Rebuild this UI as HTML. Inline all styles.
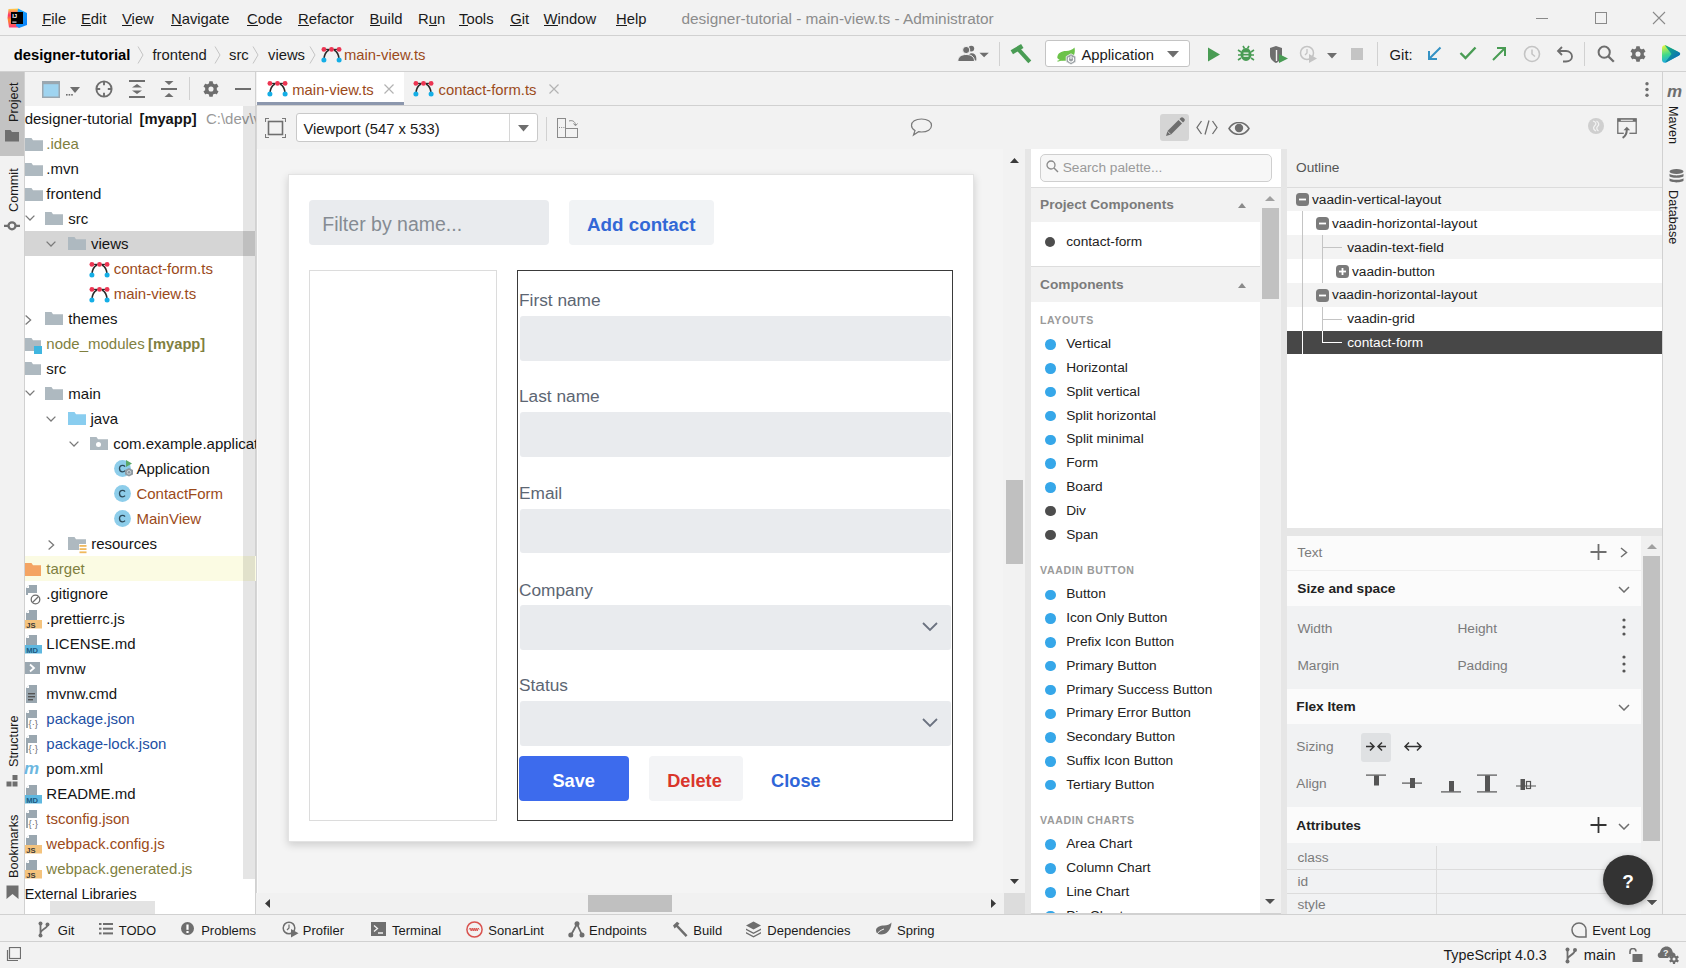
<!DOCTYPE html>
<html><head><meta charset="utf-8"><style>
*{margin:0;padding:0;box-sizing:border-box}
html,body{width:1686px;height:968px;overflow:hidden;background:#f2f2f2;font-family:"Liberation Sans", sans-serif}
.a{position:absolute}
.t{position:absolute;white-space:nowrap;line-height:1;font-family:"Liberation Sans", sans-serif}
u{text-decoration:none;border-bottom:1px solid currentColor;display:inline-block;line-height:0.95}
</style></head><body>
<svg class="a" style="left:4px;top:4px;" width="26" height="26" viewBox="0 0 26 26">
<defs><linearGradient id="ijl" x1="0" y1="0" x2="0" y2="1"><stop offset="0" stop-color="#ffd84a"/><stop offset="0.35" stop-color="#fe2f6a"/><stop offset="0.6" stop-color="#ff8a2a"/><stop offset="1" stop-color="#fe3a78"/></linearGradient>
<linearGradient id="ijr" x1="0" y1="0" x2="1" y2="1"><stop offset="0" stop-color="#1fb6ff"/><stop offset="1" stop-color="#087cfa"/></linearGradient></defs>
<path d="M4.5 5 L14 4.5 L16 23.5 L5 23.5 L3.5 14 Z" fill="url(#ijl)"/>
<path d="M14 4.5 L23 9 L23 21 L15 24 L12 22 Z" fill="url(#ijr)"/>
<rect x="7" y="8" width="12" height="12" fill="#000"/>
<rect x="8.3" y="17.6" width="4.2" height="1" fill="#fff"/>
<text x="8.2" y="14.3" font-family="Liberation Sans" font-weight="bold" font-size="6" fill="#fff">IJ</text>
</svg>
<div class="t" style="left:42.3px;top:12px;font-size:14.8px;color:#1a1a1a;font-weight:400;">File</div>
<div class="a" style="left:42px;top:25px;width:9px;height:1px;background:#1a1a1a"></div>
<div class="t" style="left:81px;top:12px;font-size:14.8px;color:#1a1a1a;font-weight:400;">Edit</div>
<div class="a" style="left:81px;top:25px;width:10px;height:1px;background:#1a1a1a"></div>
<div class="t" style="left:122px;top:12px;font-size:14.8px;color:#1a1a1a;font-weight:400;">View</div>
<div class="a" style="left:122px;top:25px;width:10px;height:1px;background:#1a1a1a"></div>
<div class="t" style="left:171px;top:12px;font-size:14.8px;color:#1a1a1a;font-weight:400;">Navigate</div>
<div class="a" style="left:171px;top:25px;width:11px;height:1px;background:#1a1a1a"></div>
<div class="t" style="left:247px;top:12px;font-size:14.8px;color:#1a1a1a;font-weight:400;">Code</div>
<div class="a" style="left:247px;top:25px;width:11px;height:1px;background:#1a1a1a"></div>
<div class="t" style="left:298px;top:12px;font-size:14.8px;color:#1a1a1a;font-weight:400;">Refactor</div>
<div class="a" style="left:298px;top:25px;width:11px;height:1px;background:#1a1a1a"></div>
<div class="t" style="left:369.5px;top:12px;font-size:14.8px;color:#1a1a1a;font-weight:400;">Build</div>
<div class="a" style="left:370px;top:25px;width:10px;height:1px;background:#1a1a1a"></div>
<div class="t" style="left:418px;top:12px;font-size:14.8px;color:#1a1a1a;font-weight:400;">Run</div>
<div class="a" style="left:429px;top:25px;width:8px;height:1px;background:#1a1a1a"></div>
<div class="t" style="left:459px;top:12px;font-size:14.8px;color:#1a1a1a;font-weight:400;">Tools</div>
<div class="a" style="left:459px;top:25px;width:9px;height:1px;background:#1a1a1a"></div>
<div class="t" style="left:510.3px;top:12px;font-size:14.8px;color:#1a1a1a;font-weight:400;">Git</div>
<div class="a" style="left:510px;top:25px;width:12px;height:1px;background:#1a1a1a"></div>
<div class="t" style="left:543.6px;top:12px;font-size:14.8px;color:#1a1a1a;font-weight:400;">Window</div>
<div class="a" style="left:544px;top:25px;width:14px;height:1px;background:#1a1a1a"></div>
<div class="t" style="left:616px;top:12px;font-size:14.8px;color:#1a1a1a;font-weight:400;">Help</div>
<div class="a" style="left:616px;top:25px;width:11px;height:1px;background:#1a1a1a"></div>
<div class="t" style="left:681.5px;top:11px;font-size:15.4px;color:#8c8c8c;font-weight:400;">designer-tutorial - main-view.ts - Administrator</div>
<div class="a" style="left:1536px;top:18px;width:12px;height:1px;background:#8a8a8a"></div>
<div class="a" style="left:1595px;top:12px;width:12px;height:12px;border:1px solid #8a8a8a"></div>
<svg class="a" style="left:1652px;top:11px;" width="14" height="14" viewBox="0 0 14 14"><path d="M1 1 L13 13 M13 1 L1 13" stroke="#8a8a8a" stroke-width="1.1"/></svg>
<div class="a" style="left:0px;top:35px;width:1686px;height:1px;background:#d1d1d1"></div>
<div class="t" style="left:13.7px;top:48px;font-size:14.8px;color:#000;font-weight:700;">designer-tutorial</div>
<svg class="a" style="left:137px;top:46px;" width="7" height="18" viewBox="0 0 7 18"><path d="M1 0.5 L6 9 L1 17.5" stroke="#c4c4c4" stroke-width="1" fill="none"/></svg>
<div class="t" style="left:152.5px;top:48px;font-size:14.8px;color:#1a1a1a;font-weight:400;">frontend</div>
<svg class="a" style="left:214px;top:46px;" width="7" height="18" viewBox="0 0 7 18"><path d="M1 0.5 L6 9 L1 17.5" stroke="#c4c4c4" stroke-width="1" fill="none"/></svg>
<div class="t" style="left:229px;top:48px;font-size:14.8px;color:#1a1a1a;font-weight:400;">src</div>
<svg class="a" style="left:252px;top:46px;" width="7" height="18" viewBox="0 0 7 18"><path d="M1 0.5 L6 9 L1 17.5" stroke="#c4c4c4" stroke-width="1" fill="none"/></svg>
<div class="t" style="left:268px;top:48px;font-size:14.8px;color:#1a1a1a;font-weight:400;">views</div>
<svg class="a" style="left:309px;top:46px;" width="7" height="18" viewBox="0 0 7 18"><path d="M1 0.5 L6 9 L1 17.5" stroke="#c4c4c4" stroke-width="1" fill="none"/></svg>
<svg class="a" style="left:320.5px;top:46px;" width="21" height="17" viewBox="0 0 21 17">
<path d="M2.9 3.4 L18.1 3.4" stroke="#2a2a2a" stroke-width="1.2"/>
<path d="M3 13 C3.3 8.5 5 5.5 8 4 M13 4 C16 5.5 17.7 8.5 18 13" stroke="#2a2a2a" stroke-width="1.5" fill="none"/>
<circle cx="2.9" cy="3.4" r="2.4" fill="#ec3552"/><circle cx="10.5" cy="3.4" r="2.4" fill="#ec3552"/><circle cx="18.1" cy="3.4" r="2.4" fill="#ec3552"/>
<circle cx="2.9" cy="13.9" r="2.5" fill="#14aee6"/><circle cx="18.1" cy="13.9" r="2.5" fill="#14aee6"/>
</svg>
<div class="t" style="left:344px;top:48px;font-size:14.8px;color:#9b4a1a;font-weight:400;">main-view.ts</div>
<svg class="a" style="left:957px;top:45px;" width="34" height="17" viewBox="0 0 34 17">
<circle cx="14.3" cy="3.6" r="2.9" fill="#6e6e6e"/><path d="M11 15.5 C11 10 12.5 8.3 14.8 8.3 C17.2 8.3 19.3 10 19.3 13 L19.3 15.5 Z" fill="#6e6e6e"/>
<circle cx="9.2" cy="5" r="3.6" stroke="#f2f2f2" stroke-width="1" fill="#6e6e6e"/><path d="M0.8 16.5 C0.8 11.5 4.5 9.5 9.2 9.5 C13.9 9.5 17.5 11.5 17.5 16.5 Z" stroke="#f2f2f2" stroke-width="1" fill="#6e6e6e"/>
<path d="M22.5 7.8 L31.8 7.8 L27.1 12.2 Z" fill="#6e6e6e"/></svg>
<div class="a" style="left:999px;top:42px;width:1px;height:24px;background:#d1d1d1"></div>
<svg class="a" style="left:1010px;top:44px;" width="22" height="20" viewBox="0 0 22 20"><path d="M1.8 8.3 L12.3 2" stroke="#499c54" stroke-width="4.6"/><path d="M8.2 5.2 L19.8 17.8" stroke="#499c54" stroke-width="4"/></svg>
<div class="a" style="left:1045px;top:40px;width:145px;height:27px;background:#fff;border:1px solid #c4c4c4;border-radius:3px"></div>
<svg class="a" style="left:1056px;top:47px;" width="21" height="18" viewBox="0 0 21 18">
<path d="M1.3 11 C1.3 6 5.5 4 10 4 C13.5 4 16.5 2.5 18.5 0.5 C19.5 5 18.5 10 14 12.5 C10 14.5 4 14.5 1.3 11 Z" fill="#6cc24a"/>
<path d="M1.5 14.3 L7 12.5" stroke="#6cc24a" stroke-width="1.2"/>
<path d="M15 6.8 L19.8 9.5 L19.8 15 L15 17.7 L10.2 15 L10.2 9.5 Z" fill="#9aa0a4" stroke="#f7f7f7" stroke-width="0.8"/>
<path d="M13.3 10.3 A2.7 2.7 0 1 0 16.7 10.3" fill="none" stroke="#fff" stroke-width="1.1"/><path d="M15 8.8 L15 12" stroke="#fff" stroke-width="1.1"/></svg>
<div class="t" style="left:1081.5px;top:48px;font-size:14.8px;color:#1a1a1a;font-weight:400;">Application</div>
<svg class="a" style="left:1167px;top:51px;" width="12" height="7" viewBox="0 0 12 7"><path d="M0 0 L12 0 L6 6.5 Z" fill="#6e6e6e"/></svg>
<svg class="a" style="left:1207px;top:47px;" width="14" height="15" viewBox="0 0 14 15"><path d="M1 0.5 L13 7.5 L1 14.5 Z" fill="#499c54"/></svg>
<svg class="a" style="left:1237px;top:45px;" width="18" height="17" viewBox="0 0 18 17">
<ellipse cx="9" cy="9.5" rx="5.5" ry="6.5" fill="#499c54"/>
<path d="M1 5 L4 7 M17 5 L14 7 M1 10 L4 10 M17 10 L14 10 M1 15 L4 13 M17 15 L14 13 M6 1 L7.5 3.5 M12 1 L10.5 3.5" stroke="#499c54" stroke-width="1.6"/>
<rect x="6.5" y="7.5" width="5" height="1.3" fill="#f2f2f2"/><rect x="6.5" y="10.5" width="5" height="1.3" fill="#f2f2f2"/></svg>
<svg class="a" style="left:1269px;top:46px;" width="20" height="18" viewBox="0 0 20 18">
<path d="M1 2 L7 0 L13 2 L13 9 C13 13 10 15.5 7 17 C4 15.5 1 13 1 9 Z" fill="#6e6e6e"/>
<path d="M7.5 4 L7.5 15" stroke="#f2f2f2" stroke-width="1.4"/>
<path d="M10 8 L19 12.5 L10 17 Z" fill="#499c54"/></svg>
<svg class="a" style="left:1299px;top:45px;" width="20" height="19" viewBox="0 0 20 19">
<circle cx="8" cy="8" r="6.5" fill="none" stroke="#c4c4c4" stroke-width="1.5"/>
<path d="M8 4 L8 8 L6 10" stroke="#c4c4c4" stroke-width="1.3" fill="none"/>
<path d="M10 9 L18 13.5 L10 18 Z" fill="#c4c4c4"/></svg>
<svg class="a" style="left:1327px;top:53px;" width="10" height="6" viewBox="0 0 10 6"><path d="M0 0 L10 0 L5 5.5 Z" fill="#6e6e6e"/></svg>
<div class="a" style="left:1351px;top:48px;width:12px;height:12px;background:#c4c4c4"></div>
<div class="a" style="left:1377px;top:42px;width:1px;height:24px;background:#d1d1d1"></div>
<div class="t" style="left:1389.6px;top:48px;font-size:14.8px;color:#1a1a1a;font-weight:400;">Git:</div>
<svg class="a" style="left:1427px;top:46px;" width="15" height="15" viewBox="0 0 15 15"><path d="M13.5 1.5 L3 12 M2 5 L2 13 L10 13" stroke="#3592c4" stroke-width="2" fill="none"/></svg>
<svg class="a" style="left:1459px;top:46px;" width="18" height="14" viewBox="0 0 18 14"><path d="M1.5 7 L6.5 12 L16.5 1.5" stroke="#499c54" stroke-width="2.4" fill="none"/></svg>
<svg class="a" style="left:1491px;top:46px;" width="16" height="16" viewBox="0 0 16 16"><path d="M2 14 L13.5 2.5 M6 2 L14 2 L14 10" stroke="#499c54" stroke-width="2" fill="none"/></svg>
<svg class="a" style="left:1523px;top:45px;" width="18" height="18" viewBox="0 0 18 18"><circle cx="9" cy="9" r="7.5" fill="none" stroke="#c4c4c4" stroke-width="1.6"/>
<path d="M9 4.5 L9 9 L12 11.5" stroke="#c4c4c4" stroke-width="1.5" fill="none"/></svg>
<svg class="a" style="left:1556px;top:45px;" width="18" height="18" viewBox="0 0 18 18"><path d="M6 2 L2 6 L6 10" stroke="#6e6e6e" stroke-width="1.8" fill="none"/>
<path d="M2.5 6 L10 6 C13.5 6 16 8.5 16 11.5 C16 14.5 13.5 16.5 10 16.5 L7 16.5" stroke="#6e6e6e" stroke-width="1.8" fill="none"/></svg>
<div class="a" style="left:1584px;top:42px;width:1px;height:24px;background:#d1d1d1"></div>
<svg class="a" style="left:1597px;top:45px;" width="19" height="19" viewBox="0 0 19 19"><circle cx="7.2" cy="7.2" r="5.6" fill="none" stroke="#6e6e6e" stroke-width="2"/>
<path d="M11.2 11.2 L16.8 16.8" stroke="#6e6e6e" stroke-width="2.3"/></svg>
<svg class="a" style="left:1629.8px;top:46px;" width="16" height="16" viewBox="0 0 16 16"><rect x="6.1" y="0.3" width="3.8" height="15.4" rx="0.6" fill="#6e6e6e" transform="rotate(0 8.0 8.0)"/><rect x="6.1" y="0.3" width="3.8" height="15.4" rx="0.6" fill="#6e6e6e" transform="rotate(60 8.0 8.0)"/><rect x="6.1" y="0.3" width="3.8" height="15.4" rx="0.6" fill="#6e6e6e" transform="rotate(120 8.0 8.0)"/><circle cx="8.0" cy="8.0" r="5.92" fill="#6e6e6e"/><circle cx="8.0" cy="8.0" r="2.56" fill="#f2f2f2"/></svg>
<svg class="a" style="left:1661px;top:45px;" width="20" height="18" viewBox="0 0 20 18">
<defs><linearGradient id="jb" x1="0" y1="0" x2="0.3" y2="1"><stop offset="0" stop-color="#f3f63a"/><stop offset="0.55" stop-color="#3fd98a"/><stop offset="1" stop-color="#1aa6e8"/></linearGradient>
<linearGradient id="jb2" x1="0" y1="0" x2="1" y2="1"><stop offset="0" stop-color="#10b87a"/><stop offset="1" stop-color="#0b5bc8"/></linearGradient></defs>
<path d="M1 3.3 C1 0.8 3.2 -0.3 5.5 0.8 L18 7.3 C19.6 8.2 19.6 9.6 18 10.5 L5.5 17.2 C3 18.4 1 17.3 1 14.8 Z" fill="url(#jb)"/>
<path d="M3.8 0.3 C4.5 0.2 5 0.5 5.5 0.8 L18 7.3 C19.6 8.2 19.6 9.6 18 10.5 L5.5 17.2 C5 17.5 4.5 17.6 4 17.6 L10.5 9 Z" fill="url(#jb2)"/></svg>
<div class="a" style="left:0px;top:71px;width:1686px;height:1px;background:#d1d1d1"></div>
<div class="a" style="left:0px;top:72px;width:24px;height:842px;background:#f2f2f2"></div>
<div class="a" style="left:24px;top:72px;width:1px;height:842px;background:#d1d1d1"></div>
<div class="a" style="left:0px;top:72px;width:24px;height:84px;background:#c3c3c3"></div>
<div class="t" style="left:17.6px;top:112.2px;font-size:12.7px;color:#1a1a1a;font-weight:400;transform-origin:0 10px;transform:rotate(-90deg);">Project</div>
<svg class="a" style="left:5px;top:129px;" width="15" height="13" viewBox="0 0 15 13"><path d="M0 1 L5.5 1 L7 3 L14 3 L14 12.5 L0 12.5 Z" fill="#6e6e6e"/></svg>
<div class="t" style="left:17.6px;top:202px;font-size:12.7px;color:#1a1a1a;font-weight:400;transform-origin:0 10px;transform:rotate(-90deg);">Commit</div>
<svg class="a" style="left:4px;top:219.5px;" width="16" height="12" viewBox="0 0 16 12"><circle cx="8" cy="5.8" r="3.5" fill="none" stroke="#6e6e6e" stroke-width="2.3"/><path d="M0 5.8 L4.3 5.8 M11.7 5.8 L16 5.8" stroke="#6e6e6e" stroke-width="2.2"/></svg>
<div class="t" style="left:17.6px;top:757.4px;font-size:12.7px;color:#1a1a1a;font-weight:400;transform-origin:0 10px;transform:rotate(-90deg);">Structure</div>
<svg class="a" style="left:6px;top:775px;" width="13" height="12" viewBox="0 0 13 12"><rect x="6.5" y="0" width="5" height="5" fill="#6e6e6e"/><rect x="0.5" y="6.5" width="5" height="5" fill="#6e6e6e"/><rect x="6.5" y="6.5" width="5" height="5" fill="#6e6e6e"/></svg>
<div class="t" style="left:17.6px;top:868.3px;font-size:12.7px;color:#1a1a1a;font-weight:400;transform-origin:0 10px;transform:rotate(-90deg);">Bookmarks</div>
<svg class="a" style="left:6px;top:885px;" width="13" height="15" viewBox="0 0 13 15"><path d="M0.5 0.5 L12.5 0.5 L12.5 14 L6.5 9 L0.5 14 Z" fill="#6e6e6e"/></svg>
<div class="a" style="left:25px;top:72px;width:231px;height:34px;background:#f2f2f2"></div>
<svg class="a" style="left:42px;top:81px;" width="18" height="17" viewBox="0 0 18 17"><rect x="0" y="0" width="18" height="17" fill="#9aa7b0"/><rect x="1.5" y="3.2" width="15" height="12.3" fill="#9fd4f0"/></svg>
<svg class="a" style="left:66px;top:87px;" width="14" height="9" viewBox="0 0 14 9"><path d="M4 0 L14 0 L9 6 Z" fill="#6e6e6e"/><rect x="0" y="7" width="1.6" height="1.6" fill="#6e6e6e"/><rect x="2.6" y="7" width="1.6" height="1.6" fill="#6e6e6e"/><rect x="5.2" y="7" width="1.6" height="1.6" fill="#6e6e6e"/></svg>
<svg class="a" style="left:95px;top:80px;" width="18" height="18" viewBox="0 0 18 18"><circle cx="9" cy="9" r="7.6" fill="none" stroke="#6e6e6e" stroke-width="1.9"/><path d="M9 1.5 L9 5.2 M9 12.8 L9 16.5 M1.5 9 L5.2 9 M12.8 9 L16.5 9" stroke="#6e6e6e" stroke-width="1.9"/></svg>
<svg class="a" style="left:129px;top:80px;" width="16" height="18" viewBox="0 0 16 18"><rect x="0" y="0" width="16" height="2" fill="#6e6e6e"/><rect x="0" y="16" width="16" height="2" fill="#6e6e6e"/><path d="M3 7.5 L8 4 L13 7.5 Z M3 10.5 L8 14 L13 10.5 Z" fill="#6e6e6e"/></svg>
<svg class="a" style="left:161px;top:80px;" width="16" height="18" viewBox="0 0 16 18"><path d="M3.5 1 L12.5 1 L8 5 Z M3.5 17 L12.5 17 L8 13 Z" fill="#6e6e6e"/><rect x="0" y="8" width="16" height="2" fill="#6e6e6e"/></svg>
<div class="a" style="left:189px;top:77px;width:1px;height:23px;background:#d1d1d1"></div>
<svg class="a" style="left:203px;top:81px;" width="16" height="16" viewBox="0 0 16 16"><rect x="6.1" y="0.3" width="3.8" height="15.4" rx="0.6" fill="#6e6e6e" transform="rotate(0 8.0 8.0)"/><rect x="6.1" y="0.3" width="3.8" height="15.4" rx="0.6" fill="#6e6e6e" transform="rotate(60 8.0 8.0)"/><rect x="6.1" y="0.3" width="3.8" height="15.4" rx="0.6" fill="#6e6e6e" transform="rotate(120 8.0 8.0)"/><circle cx="8.0" cy="8.0" r="5.92" fill="#6e6e6e"/><circle cx="8.0" cy="8.0" r="2.56" fill="#f2f2f2"/></svg>
<div class="a" style="left:235px;top:88px;width:16px;height:2px;background:#6e6e6e"></div>
<div class="a" style="left:25px;top:106px;width:231px;height:808px;background:#fff"></div>
<div class="a" style="left:255px;top:72px;width:1px;height:842px;background:#d1d1d1"></div>
<div class="a" style="left:25px;top:231px;width:231px;height:25px;background:#d5d5d5"></div>
<div class="a" style="left:25px;top:556px;width:231px;height:25px;background:#fbfbe3"></div>
<div class="t" style="left:24.7px;top:111.4px;font-size:15px;color:#141414;font-weight:400;">designer-tutorial</div>
<div class="t" style="left:139.5px;top:112.4px;font-size:14.7px;color:#141414;font-weight:700;">[myapp]</div>
<div class="t" style="left:205.9px;top:111.4px;font-size:15px;color:#999999;font-weight:400;">C:\dev\v</div>
<svg class="a" style="left:25px;top:138px;" width="18" height="13" viewBox="0 0 18 13"><path d="M0 0 L6.5 0 L8 2.3 L18 2.3 L18 13 L0 13 Z" fill="#aeb9c0"/></svg>
<div class="t" style="left:46.3px;top:136.4px;font-size:15px;color:#7f7f3f;font-weight:400;">.idea</div>
<svg class="a" style="left:25px;top:163px;" width="18" height="13" viewBox="0 0 18 13"><path d="M0 0 L6.5 0 L8 2.3 L18 2.3 L18 13 L0 13 Z" fill="#aeb9c0"/></svg>
<div class="t" style="left:46.3px;top:161.4px;font-size:15px;color:#141414;font-weight:400;">.mvn</div>
<svg class="a" style="left:25px;top:188px;" width="18" height="13" viewBox="0 0 18 13"><path d="M0 0 L6.5 0 L8 2.3 L18 2.3 L18 13 L0 13 Z" fill="#aeb9c0"/></svg>
<div class="t" style="left:46.3px;top:186.4px;font-size:15px;color:#141414;font-weight:400;">frontend</div>
<svg class="a" style="left:25px;top:215px;" width="10" height="6" viewBox="0 0 10 6"><path d="M0.6 0.6 L5 5 L9.4 0.6" stroke="#7a7a7a" stroke-width="1.3" fill="none"/></svg>
<svg class="a" style="left:45px;top:212px;" width="18" height="13" viewBox="0 0 18 13"><path d="M0 0 L6.5 0 L8 2.3 L18 2.3 L18 13 L0 13 Z" fill="#aeb9c0"/></svg>
<div class="t" style="left:68.3px;top:211.4px;font-size:15px;color:#141414;font-weight:400;">src</div>
<svg class="a" style="left:46px;top:240.5px;" width="10" height="6" viewBox="0 0 10 6"><path d="M0.6 0.6 L5 5 L9.4 0.6" stroke="#7a7a7a" stroke-width="1.3" fill="none"/></svg>
<svg class="a" style="left:68px;top:237px;" width="18" height="13" viewBox="0 0 18 13"><path d="M0 0 L6.5 0 L8 2.3 L18 2.3 L18 13 L0 13 Z" fill="#aeb9c0"/></svg>
<div class="t" style="left:91px;top:236.4px;font-size:15px;color:#141414;font-weight:400;">views</div>
<svg class="a" style="left:88.5px;top:261px;" width="21" height="17" viewBox="0 0 21 17">
<path d="M2.9 3.4 L18.1 3.4" stroke="#2a2a2a" stroke-width="1.2"/>
<path d="M3 13 C3.3 8.5 5 5.5 8 4 M13 4 C16 5.5 17.7 8.5 18 13" stroke="#2a2a2a" stroke-width="1.5" fill="none"/>
<circle cx="2.9" cy="3.4" r="2.4" fill="#ec3552"/><circle cx="10.5" cy="3.4" r="2.4" fill="#ec3552"/><circle cx="18.1" cy="3.4" r="2.4" fill="#ec3552"/>
<circle cx="2.9" cy="13.9" r="2.5" fill="#14aee6"/><circle cx="18.1" cy="13.9" r="2.5" fill="#14aee6"/>
</svg>
<div class="t" style="left:113.7px;top:261.4px;font-size:15px;color:#9b4a1a;font-weight:400;">contact-form.ts</div>
<svg class="a" style="left:88.5px;top:286px;" width="21" height="17" viewBox="0 0 21 17">
<path d="M2.9 3.4 L18.1 3.4" stroke="#2a2a2a" stroke-width="1.2"/>
<path d="M3 13 C3.3 8.5 5 5.5 8 4 M13 4 C16 5.5 17.7 8.5 18 13" stroke="#2a2a2a" stroke-width="1.5" fill="none"/>
<circle cx="2.9" cy="3.4" r="2.4" fill="#ec3552"/><circle cx="10.5" cy="3.4" r="2.4" fill="#ec3552"/><circle cx="18.1" cy="3.4" r="2.4" fill="#ec3552"/>
<circle cx="2.9" cy="13.9" r="2.5" fill="#14aee6"/><circle cx="18.1" cy="13.9" r="2.5" fill="#14aee6"/>
</svg>
<div class="t" style="left:113.7px;top:286.4px;font-size:15px;color:#9b4a1a;font-weight:400;">main-view.ts</div>
<svg class="a" style="left:25px;top:314.5px;" width="7" height="10" viewBox="0 0 7 10"><path d="M0.6 0.6 L5.6 5 L0.6 9.4" stroke="#7a7a7a" stroke-width="1.3" fill="none"/></svg>
<svg class="a" style="left:45px;top:312px;" width="18" height="13" viewBox="0 0 18 13"><path d="M0 0 L6.5 0 L8 2.3 L18 2.3 L18 13 L0 13 Z" fill="#aeb9c0"/></svg>
<div class="t" style="left:68.3px;top:311.4px;font-size:15px;color:#141414;font-weight:400;">themes</div>
<svg class="a" style="left:25px;top:337.5px;" width="16" height="13" viewBox="0 0 16 13"><path d="M0 0 L6.5 0 L8 2.3 L16 2.3 L16 13 L0 13 Z" fill="#aeb9c0"/></svg>
<div class="a" style="left:34px;top:346px;width:8px;height:8px;background:#40b6e0"></div>
<div class="t" style="left:46.3px;top:336.4px;font-size:15px;color:#7f7f3f;font-weight:400;">node_modules</div>
<div class="t" style="left:148.1px;top:337.4px;font-size:14.7px;color:#7f7f3f;font-weight:700;">[myapp]</div>
<svg class="a" style="left:25px;top:362px;" width="16" height="13" viewBox="0 0 16 13"><path d="M0 0 L6.5 0 L8 2.3 L16 2.3 L16 13 L0 13 Z" fill="#aeb9c0"/></svg>
<div class="t" style="left:46.3px;top:361.4px;font-size:15px;color:#141414;font-weight:400;">src</div>
<svg class="a" style="left:25px;top:390px;" width="10" height="6" viewBox="0 0 10 6"><path d="M0.6 0.6 L5 5 L9.4 0.6" stroke="#7a7a7a" stroke-width="1.3" fill="none"/></svg>
<svg class="a" style="left:45px;top:387px;" width="18" height="13" viewBox="0 0 18 13"><path d="M0 0 L6.5 0 L8 2.3 L18 2.3 L18 13 L0 13 Z" fill="#aeb9c0"/></svg>
<div class="t" style="left:68.3px;top:386.4px;font-size:15px;color:#141414;font-weight:400;">main</div>
<svg class="a" style="left:46px;top:415.5px;" width="10" height="6" viewBox="0 0 10 6"><path d="M0.6 0.6 L5 5 L9.4 0.6" stroke="#7a7a7a" stroke-width="1.3" fill="none"/></svg>
<svg class="a" style="left:68px;top:412px;" width="18" height="13" viewBox="0 0 18 13"><path d="M0 0 L6.5 0 L8 2.3 L18 2.3 L18 13 L0 13 Z" fill="#89cdef"/></svg>
<div class="t" style="left:90.5px;top:411.4px;font-size:15px;color:#141414;font-weight:400;">java</div>
<svg class="a" style="left:69px;top:440.5px;" width="10" height="6" viewBox="0 0 10 6"><path d="M0.6 0.6 L5 5 L9.4 0.6" stroke="#7a7a7a" stroke-width="1.3" fill="none"/></svg>
<svg class="a" style="left:90px;top:436.5px;" width="18" height="13" viewBox="0 0 18 13"><path d="M0 0 L6.5 0 L8 2.3 L18 2.3 L18 13 L0 13 Z" fill="#aeb9c0"/></svg>
<div class="a" style="left:96px;top:442px;width:5px;height:5px;background:#fff;border-radius:50%"></div>
<div class="t" style="left:113.2px;top:436.4px;font-size:15px;color:#141414;font-weight:400;">com.example.application</div>
<svg class="a" style="left:113.5px;top:459.5px;" width="19" height="17" viewBox="0 0 19 17"><circle cx="8.5" cy="8.5" r="8.4" fill="#8dcdea"/><path d="M11 6.6 C10.4 5.8 9.6 5.4 8.6 5.4 C6.8 5.4 5.5 6.8 5.5 8.6 C5.5 10.4 6.8 11.8 8.6 11.8 C9.6 11.8 10.4 11.4 11 10.6" stroke="#2d4a5a" stroke-width="1.35" fill="none"/><path d="M12 0 L18 3.5 L12 7 Z" fill="#59a869"/><path d="M11 10 L15 8 L19 10 L19 14.5 L15 16.5 L11 14.5 Z" fill="#8f9aa2"/><circle cx="15" cy="12.3" r="1.8" fill="none" stroke="#d0d8dd" stroke-width="0.9"/></svg>
<div class="t" style="left:136.4px;top:461.4px;font-size:15px;color:#141414;font-weight:400;">Application</div>
<svg class="a" style="left:113.5px;top:484.8px;" width="19" height="17" viewBox="0 0 19 17"><circle cx="8.5" cy="8.5" r="8.4" fill="#8dcdea"/><path d="M11 6.6 C10.4 5.8 9.6 5.4 8.6 5.4 C6.8 5.4 5.5 6.8 5.5 8.6 C5.5 10.4 6.8 11.8 8.6 11.8 C9.6 11.8 10.4 11.4 11 10.6" stroke="#2d4a5a" stroke-width="1.35" fill="none"/></svg>
<div class="t" style="left:136.4px;top:486.4px;font-size:15px;color:#9b4a1a;font-weight:400;">ContactForm</div>
<svg class="a" style="left:113.5px;top:509.8px;" width="19" height="17" viewBox="0 0 19 17"><circle cx="8.5" cy="8.5" r="8.4" fill="#8dcdea"/><path d="M11 6.6 C10.4 5.8 9.6 5.4 8.6 5.4 C6.8 5.4 5.5 6.8 5.5 8.6 C5.5 10.4 6.8 11.8 8.6 11.8 C9.6 11.8 10.4 11.4 11 10.6" stroke="#2d4a5a" stroke-width="1.35" fill="none"/></svg>
<div class="t" style="left:136.4px;top:511.4px;font-size:15px;color:#9b4a1a;font-weight:400;">MainView</div>
<svg class="a" style="left:47.5px;top:539.5px;" width="7" height="10" viewBox="0 0 7 10"><path d="M0.6 0.6 L5.6 5 L0.6 9.4" stroke="#7a7a7a" stroke-width="1.3" fill="none"/></svg>
<svg class="a" style="left:68px;top:536.5px;" width="18" height="13" viewBox="0 0 18 13"><path d="M0 0 L6.5 0 L8 2.3 L18 2.3 L18 13 L0 13 Z" fill="#aeb9c0"/></svg>
<svg class="a" style="left:79px;top:544px;" width="8" height="10" viewBox="0 0 8 10"><rect width="8" height="10" fill="#fff"/><rect x="0.5" y="1" width="7" height="1.8" fill="#f0b95e"/><rect x="0.5" y="4.2" width="7" height="1.8" fill="#f0b95e"/><rect x="0.5" y="7.4" width="7" height="1.8" fill="#f0b95e"/></svg>
<div class="t" style="left:91.2px;top:536.4px;font-size:15px;color:#141414;font-weight:400;">resources</div>
<svg class="a" style="left:25px;top:562.5px;" width="16" height="13" viewBox="0 0 16 13"><path d="M0 0 L6.5 0 L8 2.3 L16 2.3 L16 13 L0 13 Z" fill="#f4a463"/></svg>
<div class="t" style="left:46.3px;top:561.4px;font-size:15px;color:#7f7f3f;font-weight:400;">target</div>
<svg class="a" style="left:25px;top:585px;" width="13" height="11" viewBox="0 0 13 11"><path d="M4 0 L12 0 L12 10 L1 10 L1 3 Z" fill="#9aa7b0"/><path d="M1 3 L4 0 L4 3 Z" fill="#fff"/></svg>
<svg class="a" style="left:28px;top:593px;" width="14" height="12" viewBox="0 0 14 12"><rect width="14" height="12" fill="#fff"/><circle cx="7.5" cy="6.5" r="4.3" fill="none" stroke="#6e6e6e" stroke-width="1.3"/><path d="M4.5 9.5 L10.5 3.5" stroke="#6e6e6e" stroke-width="1.3"/></svg>
<div class="t" style="left:46.3px;top:586.4px;font-size:15px;color:#141414;font-weight:400;">.gitignore</div>
<svg class="a" style="left:25px;top:610px;" width="13" height="11" viewBox="0 0 13 11"><path d="M4 0 L12 0 L12 10 L1 10 L1 3 Z" fill="#9aa7b0"/><path d="M1 3 L4 0 L4 3 Z" fill="#fff"/></svg>
<svg class="a" style="left:24.6px;top:620px;" width="17" height="8.5" viewBox="0 0 17 8.5"><rect x="0" y="0" width="17" height="8.5" fill="#f4c37d"/><text x="1.3" y="7.6" font-family="Liberation Sans" font-weight="bold" font-size="7.6" fill="#3a3a3a">JS</text></svg>
<div class="t" style="left:46.3px;top:611.4px;font-size:15px;color:#141414;font-weight:400;">.prettierrc.js</div>
<svg class="a" style="left:25px;top:635px;" width="13" height="11" viewBox="0 0 13 11"><path d="M4 0 L12 0 L12 10 L1 10 L1 3 Z" fill="#9aa7b0"/><path d="M1 3 L4 0 L4 3 Z" fill="#fff"/></svg>
<svg class="a" style="left:24.6px;top:645px;" width="17" height="8.5" viewBox="0 0 17 8.5"><rect x="0" y="0" width="17" height="8.5" fill="#5fb8e0"/><text x="1.3" y="7.6" font-family="Liberation Sans" font-weight="bold" font-size="7.6" fill="#1e5a80">MD</text></svg>
<div class="t" style="left:46.3px;top:636.4px;font-size:15px;color:#141414;font-weight:400;">LICENSE.md</div>
<svg class="a" style="left:25px;top:662px;" width="15" height="12" viewBox="0 0 15 12"><rect width="15" height="12" fill="#9aa7b0"/><path d="M5 2.5 L9 6 L5 9.5" stroke="#fff" stroke-width="1.8" fill="none"/></svg>
<div class="t" style="left:46.3px;top:661.4px;font-size:15px;color:#141414;font-weight:400;">mvnw</div>
<svg class="a" style="left:25px;top:685px;" width="13" height="18" viewBox="0 0 13 18"><path d="M4 0 L12 0 L12 18 L1 18 L1 3 Z" fill="#9aa7b0"/><path d="M1 3 L4 0 L4 3 Z" fill="#fff"/><rect x="3" y="8" width="7" height="1.4" fill="#555"/><rect x="3" y="11" width="7" height="1.4" fill="#555"/><rect x="3" y="14" width="5" height="1.4" fill="#555"/></svg>
<div class="t" style="left:46.3px;top:686.4px;font-size:15px;color:#141414;font-weight:400;">mvnw.cmd</div>
<svg class="a" style="left:25px;top:710px;" width="13" height="19" viewBox="0 0 13 19"><path d="M4 0 L12 0 L12 8 L8 8 L8 18 L1 18 L1 3 Z" fill="#9aa7b0"/><path d="M1 3 L4 0 L4 3 Z" fill="#fff"/></svg>
<svg class="a" style="left:28px;top:718px;" width="14" height="11" viewBox="0 0 14 11"><rect width="14" height="11" fill="#fff"/><text x="0.5" y="9" font-family="Liberation Sans" font-size="9.5" fill="#6e6e6e">{·}</text></svg>
<div class="t" style="left:46.3px;top:711.4px;font-size:15px;color:#1d4fa3;font-weight:400;">package.json</div>
<svg class="a" style="left:25px;top:735px;" width="13" height="19" viewBox="0 0 13 19"><path d="M4 0 L12 0 L12 8 L8 8 L8 18 L1 18 L1 3 Z" fill="#9aa7b0"/><path d="M1 3 L4 0 L4 3 Z" fill="#fff"/></svg>
<svg class="a" style="left:28px;top:743px;" width="14" height="11" viewBox="0 0 14 11"><rect width="14" height="11" fill="#fff"/><text x="0.5" y="9" font-family="Liberation Sans" font-size="9.5" fill="#6e6e6e">{·}</text></svg>
<div class="t" style="left:46.3px;top:736.4px;font-size:15px;color:#1d4fa3;font-weight:400;">package-lock.json</div>
<svg class="a" style="left:24px;top:762px;" width="20" height="13" viewBox="0 0 20 13"><text x="0" y="12" font-family="Liberation Sans" font-weight="bold" font-style="italic" font-size="17" fill="#6cb7e0">m</text></svg>
<div class="t" style="left:46.3px;top:761.4px;font-size:15px;color:#141414;font-weight:400;">pom.xml</div>
<svg class="a" style="left:25px;top:785px;" width="13" height="11" viewBox="0 0 13 11"><path d="M4 0 L12 0 L12 10 L1 10 L1 3 Z" fill="#9aa7b0"/><path d="M1 3 L4 0 L4 3 Z" fill="#fff"/></svg>
<svg class="a" style="left:24.6px;top:795px;" width="17" height="8.5" viewBox="0 0 17 8.5"><rect x="0" y="0" width="17" height="8.5" fill="#5fb8e0"/><text x="1.3" y="7.6" font-family="Liberation Sans" font-weight="bold" font-size="7.6" fill="#1e5a80">MD</text></svg>
<div class="t" style="left:46.3px;top:786.4px;font-size:15px;color:#141414;font-weight:400;">README.md</div>
<svg class="a" style="left:25px;top:810px;" width="13" height="19" viewBox="0 0 13 19"><path d="M4 0 L12 0 L12 8 L8 8 L8 18 L1 18 L1 3 Z" fill="#9aa7b0"/><path d="M1 3 L4 0 L4 3 Z" fill="#fff"/></svg>
<svg class="a" style="left:28px;top:818px;" width="14" height="11" viewBox="0 0 14 11"><rect width="14" height="11" fill="#fff"/><text x="0.5" y="9" font-family="Liberation Sans" font-size="9.5" fill="#6e6e6e">{·}</text></svg>
<div class="t" style="left:46.3px;top:811.4px;font-size:15px;color:#9b4a1a;font-weight:400;">tsconfig.json</div>
<svg class="a" style="left:25px;top:835px;" width="13" height="11" viewBox="0 0 13 11"><path d="M4 0 L12 0 L12 10 L1 10 L1 3 Z" fill="#9aa7b0"/><path d="M1 3 L4 0 L4 3 Z" fill="#fff"/></svg>
<svg class="a" style="left:24.6px;top:845px;" width="17" height="8.5" viewBox="0 0 17 8.5"><rect x="0" y="0" width="17" height="8.5" fill="#f4c37d"/><text x="1.3" y="7.6" font-family="Liberation Sans" font-weight="bold" font-size="7.6" fill="#3a3a3a">JS</text></svg>
<div class="t" style="left:46.3px;top:836.4px;font-size:15px;color:#9b4a1a;font-weight:400;">webpack.config.js</div>
<svg class="a" style="left:25px;top:860px;" width="13" height="11" viewBox="0 0 13 11"><path d="M4 0 L12 0 L12 10 L1 10 L1 3 Z" fill="#9aa7b0"/><path d="M1 3 L4 0 L4 3 Z" fill="#fff"/></svg>
<svg class="a" style="left:24.6px;top:870px;" width="17" height="8.5" viewBox="0 0 17 8.5"><rect x="0" y="0" width="17" height="8.5" fill="#f4c37d"/><text x="1.3" y="7.6" font-family="Liberation Sans" font-weight="bold" font-size="7.6" fill="#3a3a3a">JS</text></svg>
<div class="t" style="left:46.3px;top:861.4px;font-size:15px;color:#7f7f3f;font-weight:400;">webpack.generated.js</div>
<div class="t" style="left:24.7px;top:887.4px;font-size:14.4px;color:#141414;font-weight:400;">External Libraries</div>
<div class="a" style="left:50px;top:901px;width:105px;height:13px;background:#e3e3e3"></div>
<div class="a" style="left:243px;top:106px;width:12px;height:773px;background:rgba(0,0,0,0.1)"></div>
<div class="a" style="left:256px;top:72px;width:1406px;height:33px;background:#f2f2f2"></div>
<div class="a" style="left:257px;top:72px;width:147px;height:30px;background:#ffffff"></div>
<div class="a" style="left:257px;top:102px;width:147px;height:3px;background:#8c97ad"></div>
<div class="a" style="left:256px;top:105px;width:1406px;height:1px;background:#d1d1d1"></div>
<svg class="a" style="left:266.5px;top:80px;" width="21" height="17" viewBox="0 0 21 17">
<path d="M2.9 3.4 L18.1 3.4" stroke="#2a2a2a" stroke-width="1.2"/>
<path d="M3 13 C3.3 8.5 5 5.5 8 4 M13 4 C16 5.5 17.7 8.5 18 13" stroke="#2a2a2a" stroke-width="1.5" fill="none"/>
<circle cx="2.9" cy="3.4" r="2.4" fill="#ec3552"/><circle cx="10.5" cy="3.4" r="2.4" fill="#ec3552"/><circle cx="18.1" cy="3.4" r="2.4" fill="#ec3552"/>
<circle cx="2.9" cy="13.9" r="2.5" fill="#14aee6"/><circle cx="18.1" cy="13.9" r="2.5" fill="#14aee6"/>
</svg>
<div class="t" style="left:292.3px;top:82.5px;font-size:14.8px;color:#9b4a1a;font-weight:400;">main-view.ts</div>
<svg class="a" style="left:384px;top:84px;" width="10" height="10" viewBox="0 0 10 10"><path d="M0.5 0.5 L9.5 9.5 M9.5 0.5 L0.5 9.5" stroke="#b3b3b3" stroke-width="1.2"/></svg>
<svg class="a" style="left:412.5px;top:80px;" width="21" height="17" viewBox="0 0 21 17">
<path d="M2.9 3.4 L18.1 3.4" stroke="#2a2a2a" stroke-width="1.2"/>
<path d="M3 13 C3.3 8.5 5 5.5 8 4 M13 4 C16 5.5 17.7 8.5 18 13" stroke="#2a2a2a" stroke-width="1.5" fill="none"/>
<circle cx="2.9" cy="3.4" r="2.4" fill="#ec3552"/><circle cx="10.5" cy="3.4" r="2.4" fill="#ec3552"/><circle cx="18.1" cy="3.4" r="2.4" fill="#ec3552"/>
<circle cx="2.9" cy="13.9" r="2.5" fill="#14aee6"/><circle cx="18.1" cy="13.9" r="2.5" fill="#14aee6"/>
</svg>
<div class="t" style="left:438.6px;top:82.5px;font-size:14.8px;color:#9b4a1a;font-weight:400;">contact-form.ts</div>
<svg class="a" style="left:548.5px;top:84px;" width="10" height="10" viewBox="0 0 10 10"><path d="M0.5 0.5 L9.5 9.5 M9.5 0.5 L0.5 9.5" stroke="#b3b3b3" stroke-width="1.2"/></svg>
<svg class="a" style="left:1645px;top:82px;" width="4" height="15" viewBox="0 0 4 15"><circle cx="2" cy="1.8" r="1.7" fill="#6e6e6e"/><circle cx="2" cy="7.5" r="1.7" fill="#6e6e6e"/><circle cx="2" cy="13.2" r="1.7" fill="#6e6e6e"/></svg>
<div class="a" style="left:1662px;top:72px;width:1px;height:842px;background:#d1d1d1"></div>
<svg class="a" style="left:1667px;top:84px;" width="19" height="14" viewBox="0 0 19 14"><text x="0" y="12.5" font-family="Liberation Sans" font-weight="bold" font-style="italic" font-size="17" fill="#6e6e6e">m</text></svg>
<div class="t" style="left:1668.5px;top:95.5px;font-size:12.7px;color:#1a1a1a;font-weight:400;transform-origin:0 10px;transform:rotate(90deg);">Maven</div>
<div class="t" style="left:1668.5px;top:180.3px;font-size:12.7px;color:#1a1a1a;font-weight:400;transform-origin:0 10px;transform:rotate(90deg);">Database</div>
<svg class="a" style="left:1669px;top:169px;" width="15" height="15" viewBox="0 0 15 15"><ellipse cx="7.5" cy="2.6" rx="7" ry="2.5" fill="#6e6e6e"/><path d="M0.5 4.6 C0.5 7 14.5 7 14.5 4.6 L14.5 7 C14.5 9.4 0.5 9.4 0.5 7 Z" fill="#6e6e6e"/><path d="M0.5 9 C0.5 11.4 14.5 11.4 14.5 9 L14.5 11.6 C14.5 14 0.5 14 0.5 11.6 Z" fill="#6e6e6e"/></svg>
<div class="a" style="left:256px;top:106px;width:1406px;height:43px;background:#f2f2f2"></div>
<svg class="a" style="left:265px;top:118px;" width="21" height="20" viewBox="0 0 21 20"><path d="M0.5 4 L0.5 0.5 L4 0.5 M17 0.5 L20.5 0.5 L20.5 4 M20.5 16 L20.5 19.5 L17 19.5 M4 19.5 L0.5 19.5 L0.5 16" stroke="#7a7a7a" stroke-width="1.1" fill="none"/><rect x="3.5" y="3.5" width="14" height="13" fill="none" stroke="#6e6e6e" stroke-width="1.6"/></svg>
<div class="a" style="left:296px;top:113px;width:242px;height:29px;background:#fff;border:1px solid #c9c9c9;border-radius:3px"></div>
<div class="a" style="left:509px;top:114px;width:1px;height:27px;background:#d6d6d6"></div>
<svg class="a" style="left:518px;top:125px;" width="11" height="7" viewBox="0 0 11 7"><path d="M0 0 L11 0 L5.5 6.5 Z" fill="#6e6e6e"/></svg>
<div class="t" style="left:303.4px;top:122px;font-size:14.8px;color:#1a1a1a;font-weight:400;">Viewport (547 x 533)</div>
<div class="a" style="left:546px;top:117px;width:1px;height:24px;background:#d1d1d1"></div>
<svg class="a" style="left:557px;top:118px;" width="21" height="20" viewBox="0 0 21 20"><rect x="0.5" y="0.5" width="8" height="19" fill="none" stroke="#8a8a8a" stroke-width="1"/><rect x="8.5" y="10.5" width="12" height="9" fill="none" stroke="#8a8a8a" stroke-width="1"/><path d="M2 9.5 L8 9.5" stroke="#8a8a8a" stroke-dasharray="1 1.2"/><path d="M12 3 C15 2 18 3 18.5 7 M16.5 5.5 L18.5 7.8 L20.5 5.5" stroke="#8a8a8a" stroke-width="1" fill="none"/></svg>
<svg class="a" style="left:910px;top:118px;" width="23" height="19" viewBox="0 0 23 19"><path d="M11.5 1 C17.5 1 21.5 3.8 21.5 7.5 C21.5 11.2 17.5 14 11.5 14 C10.5 14 9.5 13.9 8.6 13.7 L3.5 17 L5 12.5 C2.8 11.3 1.5 9.5 1.5 7.5 C1.5 3.8 5.5 1 11.5 1 Z" fill="none" stroke="#7a7a7a" stroke-width="1.2"/></svg>
<div class="a" style="left:1160px;top:114px;width:29px;height:27px;background:#d5d5d5;border-radius:3px"></div>
<svg class="a" style="left:1163px;top:117px;" width="22" height="22" viewBox="0 0 22 22"><path d="M3 19 L4.5 14 L15.5 3 L19 6.5 L8 17.5 Z" fill="#6e6e6e"/><path d="M16.5 2 L17.8 0.7 C18.5 0 19.5 0 20.2 0.7 L21.3 1.8 C22 2.5 22 3.5 21.3 4.2 L20 5.5 Z" fill="#6e6e6e"/><path d="M4.6 14.3 L7.7 17.4" stroke="#d5d5d5" stroke-width="0.9"/></svg>
<svg class="a" style="left:1196px;top:120px;" width="22" height="15" viewBox="0 0 22 15"><path d="M5.5 1 L1 7.5 L5.5 14 M16.5 1 L21 7.5 L16.5 14 M13 0.5 L9 14.5" stroke="#6e6e6e" stroke-width="1.3" fill="none"/></svg>
<svg class="a" style="left:1228px;top:122px;" width="22" height="13" viewBox="0 0 22 13"><path d="M1 6.5 C4 1.5 8 0.5 11 0.5 C14 0.5 18 1.5 21 6.5 C18 11.5 14 12.5 11 12.5 C8 12.5 4 11.5 1 6.5 Z" fill="none" stroke="#6e6e6e" stroke-width="1.5"/><circle cx="11" cy="6" r="4.2" fill="#6e6e6e"/></svg>
<svg class="a" style="left:1588px;top:118px;" width="16" height="16" viewBox="0 0 16 16"><circle cx="8" cy="8" r="8" fill="#cfcfcf"/><path d="M5 3 C8 4 9 6 6.5 8 C4.5 10 6 12 8 13 M8.5 3 C11 4.5 11.5 7 9.5 8.5 C8 10 9 12 10.5 13" stroke="#f2f2f2" stroke-width="1.3" fill="none"/></svg>
<svg class="a" style="left:1617px;top:118px;" width="21" height="21" viewBox="0 0 21 21"><rect x="0.8" y="0.8" width="18.4" height="14.5" fill="none" stroke="#6e6e6e" stroke-width="1.3"/><rect x="0.8" y="0.8" width="18.4" height="3" fill="#6e6e6e"/><rect x="3.8" y="1.7" width="12" height="1.2" fill="#e6e6e6"/><rect x="6.8" y="14" width="5.6" height="3" fill="#f2f2f2"/><path d="M6.5 12.3 L9.8 8.8 L13.1 12.3 Z" fill="#6e6e6e"/><path d="M9.8 11.5 C9.8 15.5 8.8 18 5.6 19.8" stroke="#6e6e6e" stroke-width="2" fill="none"/></svg>
<div class="a" style="left:256px;top:149px;width:769px;height:765px;background:#f4f4f4"></div>
<div class="a" style="left:256px;top:106px;width:1px;height:808px;background:#d6d6d6"></div>
<div class="a" style="left:257px;top:149px;width:1px;height:744px;background:#fafafa"></div>
<div class="a" style="left:1003px;top:149px;width:22px;height:744px;background:#f2f2f2"></div>
<svg class="a" style="left:1010px;top:158px;" width="9" height="5" viewBox="0 0 9 5"><path d="M0 5 L4.5 0 L9 5 Z" fill="#3a3a3a"/></svg>
<div class="a" style="left:1006px;top:480px;width:17px;height:84px;background:#c0c0c0"></div>
<svg class="a" style="left:1010px;top:879px;" width="9" height="5" viewBox="0 0 9 5"><path d="M0 0 L4.5 5 L9 0 Z" fill="#3a3a3a"/></svg>
<div class="a" style="left:256px;top:893px;width:769px;height:21px;background:#f1f1f1"></div>
<svg class="a" style="left:265px;top:899px;" width="5" height="9" viewBox="0 0 5 9"><path d="M5 0 L0 4.5 L5 9 Z" fill="#3a3a3a"/></svg>
<div class="a" style="left:588px;top:895px;width:84px;height:17px;background:#c0c0c0"></div>
<svg class="a" style="left:991px;top:899px;" width="5" height="9" viewBox="0 0 5 9"><path d="M0 0 L5 4.5 L0 9 Z" fill="#3a3a3a"/></svg>
<div class="a" style="left:1004px;top:893px;width:21px;height:21px;background:#dcdcdc"></div>
<div class="a" style="left:288px;top:174px;width:686px;height:668px;background:#fff;border:1px solid #e3e3e3;box-shadow:0 3px 8px rgba(0,0,0,0.16)"></div>
<div class="a" style="left:309px;top:200px;width:240px;height:45px;background:#e9ebee;border-radius:4px"></div>
<div class="t" style="left:322.3px;top:214.5px;font-size:19.5px;color:#858b93;font-weight:400;">Filter by name...</div>
<div class="a" style="left:569px;top:200px;width:145px;height:45px;background:#f1f3f5;border-radius:4px"></div>
<div class="t" style="left:587px;top:215.5px;font-size:18.8px;color:#3368d6;font-weight:700;">Add contact</div>
<div class="a" style="left:309px;top:270px;width:188px;height:551px;border:1px solid #dcdcdc"></div>
<div class="a" style="left:517px;top:270px;width:436px;height:551px;border:1.5px solid #3a3a3a"></div>
<div class="t" style="left:519px;top:292px;font-size:17.3px;color:#5d6673;font-weight:400;">First name</div>
<div class="a" style="left:519.5px;top:316px;width:431px;height:44.5px;background:#e9ebee;border-radius:3px"></div>
<div class="t" style="left:519px;top:388.2px;font-size:17.3px;color:#5d6673;font-weight:400;">Last name</div>
<div class="a" style="left:519.5px;top:412px;width:431px;height:44.5px;background:#e9ebee;border-radius:3px"></div>
<div class="t" style="left:519px;top:484.5px;font-size:17.3px;color:#5d6673;font-weight:400;">Email</div>
<div class="a" style="left:519.5px;top:508.5px;width:431px;height:44.5px;background:#e9ebee;border-radius:3px"></div>
<div class="t" style="left:519px;top:581.5px;font-size:17.3px;color:#5d6673;font-weight:400;">Company</div>
<div class="a" style="left:519.5px;top:605.4px;width:431px;height:44.5px;background:#e9ebee;border-radius:3px"></div>
<div class="t" style="left:519px;top:677.3px;font-size:17.3px;color:#5d6673;font-weight:400;">Status</div>
<div class="a" style="left:519.5px;top:701.2px;width:431px;height:44.5px;background:#e9ebee;border-radius:3px"></div>
<svg class="a" style="left:922px;top:622.4px;" width="16" height="10" viewBox="0 0 16 10"><path d="M1 1 L8 8 L15 1" stroke="#6b7280" stroke-width="1.8" fill="none"/></svg>
<svg class="a" style="left:922px;top:718.2px;" width="16" height="10" viewBox="0 0 16 10"><path d="M1 1 L8 8 L15 1" stroke="#6b7280" stroke-width="1.8" fill="none"/></svg>
<div class="a" style="left:518.6px;top:756.3px;width:110px;height:44.5px;background:#3d6bed;border-radius:4px"></div>
<div class="t" style="left:552.4px;top:772.2px;font-size:18.2px;color:#ffffff;font-weight:700;">Save</div>
<div class="a" style="left:649.2px;top:756.3px;width:93.5px;height:44.5px;background:#f3f4f6;border-radius:4px"></div>
<div class="t" style="left:667.2px;top:772.2px;font-size:18.2px;color:#d9352b;font-weight:700;">Delete</div>
<div class="t" style="left:771.1px;top:772.2px;font-size:18.2px;color:#2f66d8;font-weight:700;">Close</div>
<div class="a" style="left:1025px;top:149px;width:6px;height:765px;background:#e6e6e6"></div>
<div class="a" style="left:1031px;top:149px;width:250px;height:765px;background:#ffffff"></div>
<div class="a" style="left:1281px;top:149px;width:6px;height:765px;background:#e6e6e6"></div>
<div class="a" style="left:1040px;top:154px;width:232px;height:28px;background:#f7f7f7;border:1px solid #cfcfcf;border-radius:5px"></div>
<svg class="a" style="left:1046px;top:160px;" width="13" height="13" viewBox="0 0 13 13"><circle cx="5" cy="5" r="4" fill="none" stroke="#8a8a8a" stroke-width="1.3"/><path d="M8 8 L12 12" stroke="#8a8a8a" stroke-width="1.5"/></svg>
<div class="t" style="left:1062.7px;top:160.7px;font-size:13.7px;color:#9a9a9a;font-weight:400;">Search palette...</div>
<div class="a" style="left:1031px;top:187px;width:250px;height:1px;background:#dddddd"></div>
<div class="a" style="left:1260px;top:188px;width:21px;height:726px;background:#f1f1f1"></div>
<svg class="a" style="left:1265px;top:196px;" width="10" height="5" viewBox="0 0 10 5"><path d="M0 5 L5 0 L10 5 Z" fill="#a0a0a0"/></svg>
<div class="a" style="left:1262px;top:208px;width:17px;height:91px;background:#c1c1c1"></div>
<svg class="a" style="left:1265px;top:899px;" width="10" height="5" viewBox="0 0 10 5"><path d="M0 0 L5 5 L10 0 Z" fill="#505050"/></svg>
<div class="a" style="left:1031px;top:188px;width:229px;height:34px;background:#f2f2f2"></div>
<div class="t" style="left:1040px;top:198px;font-size:13.7px;color:#7b7b7b;font-weight:700;">Project Components</div>
<svg class="a" style="left:1238px;top:202.5px;" width="8" height="5" viewBox="0 0 8 5"><path d="M0 5 L4 0 L8 5 Z" fill="#8a8a8a"/></svg>
<div class="a" style="left:1045px;top:236.8px;width:10px;height:10px;background:#4d4d4d;border-radius:50%"></div>
<div class="t" style="left:1066.2px;top:234.5px;font-size:13.7px;color:#222222;font-weight:400;">contact-form</div>
<div class="a" style="left:1031px;top:266px;width:229px;height:1px;background:#dddddd"></div>
<div class="a" style="left:1031px;top:267px;width:229px;height:35px;background:#f2f2f2"></div>
<div class="t" style="left:1040px;top:277.5px;font-size:13.7px;color:#7b7b7b;font-weight:700;">Components</div>
<svg class="a" style="left:1238px;top:283px;" width="8" height="5" viewBox="0 0 8 5"><path d="M0 5 L4 0 L8 5 Z" fill="#8a8a8a"/></svg>
<div class="t" style="left:1040px;top:314.6px;font-size:10.6px;color:#9a9a9a;font-weight:700;letter-spacing:0.6px;">LAYOUTS</div>
<div class="a" style="left:1045px;top:339.3px;width:10.5px;height:10.5px;background:#36a7e9;border-radius:50%"></div>
<div class="t" style="left:1066.2px;top:337.1px;font-size:13.7px;color:#222222;font-weight:400;">Vertical</div>
<div class="a" style="left:1045px;top:363.1px;width:10.5px;height:10.5px;background:#36a7e9;border-radius:50%"></div>
<div class="t" style="left:1066.2px;top:360.90000000000003px;font-size:13.7px;color:#222222;font-weight:400;">Horizontal</div>
<div class="a" style="left:1045px;top:386.90000000000003px;width:10.5px;height:10.5px;background:#36a7e9;border-radius:50%"></div>
<div class="t" style="left:1066.2px;top:384.70000000000005px;font-size:13.7px;color:#222222;font-weight:400;">Split vertical</div>
<div class="a" style="left:1045px;top:410.7px;width:10.5px;height:10.5px;background:#36a7e9;border-radius:50%"></div>
<div class="t" style="left:1066.2px;top:408.5px;font-size:13.7px;color:#222222;font-weight:400;">Split horizontal</div>
<div class="a" style="left:1045px;top:434.5px;width:10.5px;height:10.5px;background:#36a7e9;border-radius:50%"></div>
<div class="t" style="left:1066.2px;top:432.3px;font-size:13.7px;color:#222222;font-weight:400;">Split minimal</div>
<div class="a" style="left:1045px;top:458.3px;width:10.5px;height:10.5px;background:#36a7e9;border-radius:50%"></div>
<div class="t" style="left:1066.2px;top:456.1px;font-size:13.7px;color:#222222;font-weight:400;">Form</div>
<div class="a" style="left:1045px;top:482.1px;width:10.5px;height:10.5px;background:#36a7e9;border-radius:50%"></div>
<div class="t" style="left:1066.2px;top:479.90000000000003px;font-size:13.7px;color:#222222;font-weight:400;">Board</div>
<div class="a" style="left:1045px;top:505.90000000000003px;width:10.5px;height:10.5px;background:#4d4d4d;border-radius:50%"></div>
<div class="t" style="left:1066.2px;top:503.70000000000005px;font-size:13.7px;color:#222222;font-weight:400;">Div</div>
<div class="a" style="left:1045px;top:529.7px;width:10.5px;height:10.5px;background:#4d4d4d;border-radius:50%"></div>
<div class="t" style="left:1066.2px;top:527.5px;font-size:13.7px;color:#222222;font-weight:400;">Span</div>
<div class="t" style="left:1040px;top:565px;font-size:10.6px;color:#9a9a9a;font-weight:700;letter-spacing:0.6px;">VAADIN BUTTON</div>
<div class="a" style="left:1045px;top:589.5px;width:10.5px;height:10.5px;background:#36a7e9;border-radius:50%"></div>
<div class="t" style="left:1066.2px;top:587.3px;font-size:13.7px;color:#222222;font-weight:400;">Button</div>
<div class="a" style="left:1045px;top:613.3px;width:10.5px;height:10.5px;background:#36a7e9;border-radius:50%"></div>
<div class="t" style="left:1066.2px;top:611.0999999999999px;font-size:13.7px;color:#222222;font-weight:400;">Icon Only Button</div>
<div class="a" style="left:1045px;top:637.1px;width:10.5px;height:10.5px;background:#36a7e9;border-radius:50%"></div>
<div class="t" style="left:1066.2px;top:634.9px;font-size:13.7px;color:#222222;font-weight:400;">Prefix Icon Button</div>
<div class="a" style="left:1045px;top:660.9px;width:10.5px;height:10.5px;background:#36a7e9;border-radius:50%"></div>
<div class="t" style="left:1066.2px;top:658.6999999999999px;font-size:13.7px;color:#222222;font-weight:400;">Primary Button</div>
<div class="a" style="left:1045px;top:684.7px;width:10.5px;height:10.5px;background:#36a7e9;border-radius:50%"></div>
<div class="t" style="left:1066.2px;top:682.5px;font-size:13.7px;color:#222222;font-weight:400;">Primary Success Button</div>
<div class="a" style="left:1045px;top:708.5px;width:10.5px;height:10.5px;background:#36a7e9;border-radius:50%"></div>
<div class="t" style="left:1066.2px;top:706.3px;font-size:13.7px;color:#222222;font-weight:400;">Primary Error Button</div>
<div class="a" style="left:1045px;top:732.3px;width:10.5px;height:10.5px;background:#36a7e9;border-radius:50%"></div>
<div class="t" style="left:1066.2px;top:730.0999999999999px;font-size:13.7px;color:#222222;font-weight:400;">Secondary Button</div>
<div class="a" style="left:1045px;top:756.1px;width:10.5px;height:10.5px;background:#36a7e9;border-radius:50%"></div>
<div class="t" style="left:1066.2px;top:753.9px;font-size:13.7px;color:#222222;font-weight:400;">Suffix Icon Button</div>
<div class="a" style="left:1045px;top:779.9px;width:10.5px;height:10.5px;background:#36a7e9;border-radius:50%"></div>
<div class="t" style="left:1066.2px;top:777.6999999999999px;font-size:13.7px;color:#222222;font-weight:400;">Tertiary Button</div>
<div class="t" style="left:1040px;top:814.5px;font-size:10.6px;color:#9a9a9a;font-weight:700;letter-spacing:0.6px;">VAADIN CHARTS</div>
<div class="a" style="left:1045px;top:839.4000000000001px;width:10.5px;height:10.5px;background:#36a7e9;border-radius:50%"></div>
<div class="t" style="left:1066.2px;top:837.2px;font-size:13.7px;color:#222222;font-weight:400;">Area Chart</div>
<div class="a" style="left:1045px;top:863.2px;width:10.5px;height:10.5px;background:#36a7e9;border-radius:50%"></div>
<div class="t" style="left:1066.2px;top:861.0px;font-size:13.7px;color:#222222;font-weight:400;">Column Chart</div>
<div class="a" style="left:1045px;top:887.0000000000001px;width:10.5px;height:10.5px;background:#36a7e9;border-radius:50%"></div>
<div class="t" style="left:1066.2px;top:884.8000000000001px;font-size:13.7px;color:#222222;font-weight:400;">Line Chart</div>
<div class="a" style="left:1045px;top:910.8000000000001px;width:10.5px;height:10.5px;background:#36a7e9;border-radius:50%"></div>
<div class="t" style="left:1066.2px;top:908.6px;font-size:13.7px;color:#222222;font-weight:400;">Pie Chart</div>
<div class="a" style="left:1031px;top:913px;width:250px;height:1px;background:#d1d1d1"></div>
<div class="a" style="left:1287px;top:149px;width:375px;height:38px;background:#f2f2f2"></div>
<div class="t" style="left:1296px;top:160.8px;font-size:13.7px;color:#555555;font-weight:400;">Outline</div>
<div class="a" style="left:1287px;top:187px;width:375px;height:1px;background:#dcdcdc"></div>
<div class="a" style="left:1287px;top:188px;width:375px;height:340px;background:#ffffff"></div>
<div class="a" style="left:1287px;top:188px;width:375px;height:23px;background:#f3f3f3"></div>
<div class="a" style="left:1287px;top:235px;width:375px;height:24px;background:#f3f3f3"></div>
<div class="a" style="left:1287px;top:283px;width:375px;height:23.5px;background:#f3f3f3"></div>
<div class="a" style="left:1287px;top:331px;width:375px;height:23px;background:#474747"></div>
<svg class="a" style="left:1296px;top:193.3px;" width="13" height="13" viewBox="0 0 13 13"><rect x="0" y="0" width="13" height="13" rx="3.5" fill="#7b7b7b"/><rect x="3" y="5.6" width="7" height="1.8" fill="#fff"/></svg>
<div class="t" style="left:1312px;top:192.8px;font-size:13.7px;color:#222222;font-weight:400;">vaadin-vertical-layout</div>
<div class="a" style="left:1302px;top:211px;width:1px;height:143px;background:#c4c4c4"></div>
<svg class="a" style="left:1316px;top:217px;" width="13" height="13" viewBox="0 0 13 13"><rect x="0" y="0" width="13" height="13" rx="3.5" fill="#7b7b7b"/><rect x="3" y="5.6" width="7" height="1.8" fill="#fff"/></svg>
<div class="t" style="left:1331.9px;top:216.9px;font-size:13.7px;color:#222222;font-weight:400;">vaadin-horizontal-layout</div>
<div class="a" style="left:1322px;top:235px;width:1px;height:48px;background:#c4c4c4"></div>
<div class="a" style="left:1323px;top:247px;width:19px;height:1px;background:#c4c4c4"></div>
<div class="t" style="left:1347.2px;top:240.9px;font-size:13.7px;color:#222222;font-weight:400;">vaadin-text-field</div>
<svg class="a" style="left:1336px;top:264.5px;" width="13" height="13" viewBox="0 0 13 13"><rect x="0" y="0" width="13" height="13" rx="3.5" fill="#7b7b7b"/><rect x="3" y="5.6" width="7" height="1.8" fill="#fff"/><rect x="5.6" y="3" width="1.8" height="7" fill="#fff"/></svg>
<div class="t" style="left:1352px;top:264.6px;font-size:13.7px;color:#222222;font-weight:400;">vaadin-button</div>
<svg class="a" style="left:1316px;top:288.5px;" width="13" height="13" viewBox="0 0 13 13"><rect x="0" y="0" width="13" height="13" rx="3.5" fill="#7b7b7b"/><rect x="3" y="5.6" width="7" height="1.8" fill="#fff"/></svg>
<div class="t" style="left:1331.9px;top:288px;font-size:13.7px;color:#222222;font-weight:400;">vaadin-horizontal-layout</div>
<div class="a" style="left:1322px;top:306.5px;width:1px;height:36px;background:#c4c4c4"></div>
<div class="a" style="left:1323px;top:318.5px;width:19px;height:1px;background:#c4c4c4"></div>
<div class="t" style="left:1347.2px;top:312px;font-size:13.7px;color:#222222;font-weight:400;">vaadin-grid</div>
<div class="a" style="left:1322px;top:331px;width:1px;height:12px;background:#ffffff"></div>
<div class="a" style="left:1322px;top:342px;width:20px;height:1px;background:#ffffff"></div>
<div class="a" style="left:1302px;top:331px;width:1px;height:23px;background:#ffffff"></div>
<div class="t" style="left:1347.2px;top:336px;font-size:13.7px;color:#ffffff;font-weight:400;">contact-form</div>
<div class="a" style="left:1287px;top:528px;width:375px;height:8px;background:#e6e6e6"></div>
<div class="a" style="left:1287px;top:536px;width:354px;height:378px;background:#fbfbfb"></div>
<div class="a" style="left:1641px;top:536px;width:21px;height:378px;background:#f0f0f0"></div>
<svg class="a" style="left:1646.5px;top:543.8px;" width="10" height="5" viewBox="0 0 10 5"><path d="M0 5 L5 0 L10 5 Z" fill="#a0a0a0"/></svg>
<div class="a" style="left:1643px;top:556px;width:17px;height:285px;background:#c1c1c1"></div>
<svg class="a" style="left:1646.5px;top:899.5px;" width="10" height="5" viewBox="0 0 10 5"><path d="M0 0 L5 5 L10 0 Z" fill="#505050"/></svg>
<div class="t" style="left:1297.3px;top:545.6px;font-size:13.7px;color:#7d7d7d;font-weight:400;">Text</div>
<svg class="a" style="left:1589.5px;top:543.5px;" width="17" height="16" viewBox="0 0 17 16"><path d="M8.5 0 L8.5 16 M0.5 8 L16.5 8" stroke="#6e6e6e" stroke-width="1.8"/></svg>
<svg class="a" style="left:1620px;top:547px;" width="8" height="11" viewBox="0 0 8 11"><path d="M1 1 L6.5 5.5 L1 10" stroke="#6e6e6e" stroke-width="1.5" fill="none"/></svg>
<div class="a" style="left:1287px;top:570px;width:354px;height:1px;background:#eeeeee"></div>
<div class="t" style="left:1297.3px;top:581.7px;font-size:13.7px;color:#222222;font-weight:700;">Size and space</div>
<svg class="a" style="left:1618px;top:585.5px;" width="12" height="7" viewBox="0 0 12 7"><path d="M1 1 L6 6 L11 1" stroke="#6e6e6e" stroke-width="1.5" fill="none"/></svg>
<div class="a" style="left:1287px;top:606px;width:354px;height:83px;background:#f1f2f3"></div>
<div class="t" style="left:1297.4px;top:622.4px;font-size:13.7px;color:#7b7b7b;font-weight:400;">Width</div>
<div class="t" style="left:1457.4px;top:622.4px;font-size:13.7px;color:#7b7b7b;font-weight:400;">Height</div>
<div class="t" style="left:1297.4px;top:659.3px;font-size:13.7px;color:#7b7b7b;font-weight:400;">Margin</div>
<div class="t" style="left:1457.4px;top:659.3px;font-size:13.7px;color:#7b7b7b;font-weight:400;">Padding</div>
<svg class="a" style="left:1622px;top:618px;" width="4" height="18" viewBox="0 0 4 18"><circle cx="2" cy="2" r="1.6" fill="#555"/><circle cx="2" cy="9" r="1.6" fill="#555"/><circle cx="2" cy="16" r="1.6" fill="#555"/></svg>
<svg class="a" style="left:1622px;top:655px;" width="4" height="18" viewBox="0 0 4 18"><circle cx="2" cy="2" r="1.6" fill="#555"/><circle cx="2" cy="9" r="1.6" fill="#555"/><circle cx="2" cy="16" r="1.6" fill="#555"/></svg>
<div class="t" style="left:1296.3px;top:699.9px;font-size:13.7px;color:#222222;font-weight:700;">Flex Item</div>
<svg class="a" style="left:1618px;top:703.5px;" width="12" height="7" viewBox="0 0 12 7"><path d="M1 1 L6 6 L11 1" stroke="#6e6e6e" stroke-width="1.5" fill="none"/></svg>
<div class="a" style="left:1287px;top:723.5px;width:354px;height:83px;background:#f1f2f3"></div>
<div class="t" style="left:1296.3px;top:740px;font-size:13.7px;color:#7b7b7b;font-weight:400;">Sizing</div>
<div class="a" style="left:1361px;top:732.5px;width:30px;height:29px;background:#dfe1e3;border-radius:3px"></div>
<svg class="a" style="left:1365px;top:740px;" width="22" height="13" viewBox="0 0 22 13"><path d="M1 6.5 L8.5 6.5 M5 2.5 L9 6.5 L5 10.5 M21 6.5 L13.5 6.5 M17 2.5 L13 6.5 L17 10.5" stroke="#333" stroke-width="1.5" fill="none"/></svg>
<svg class="a" style="left:1403px;top:740px;" width="20" height="13" viewBox="0 0 20 13"><path d="M2 6.5 L18 6.5 M6 2.5 L2 6.5 L6 10.5 M14 2.5 L18 6.5 L14 10.5" stroke="#333" stroke-width="1.5" fill="none"/></svg>
<div class="t" style="left:1296.3px;top:776.6px;font-size:13.7px;color:#7b7b7b;font-weight:400;">Align</div>
<svg class="a" style="left:1366px;top:774px;" width="21" height="13" viewBox="0 0 21 13"><rect x="0" y="0.5" width="20" height="1.2" fill="#555555"/><rect x="8" y="1.5" width="5" height="10" fill="#555555"/></svg>
<svg class="a" style="left:1402px;top:777px;" width="21" height="12" viewBox="0 0 21 12"><rect x="0" y="5.5" width="20" height="1.2" fill="#555555"/><rect x="8" y="1" width="5" height="10" fill="#555555"/></svg>
<svg class="a" style="left:1441px;top:780px;" width="21" height="13" viewBox="0 0 21 13"><rect x="0" y="11.3" width="20" height="1.2" fill="#555555"/><rect x="8" y="1" width="5" height="10.5" fill="#555555"/></svg>
<svg class="a" style="left:1477px;top:774px;" width="21" height="19" viewBox="0 0 21 19"><rect x="0" y="0.5" width="20" height="1.2" fill="#555555"/><rect x="0" y="17.3" width="20" height="1.2" fill="#555555"/><rect x="8" y="1.5" width="5" height="16" fill="#555555"/></svg>
<svg class="a" style="left:1515.5px;top:778px;" width="21" height="13" viewBox="0 0 21 13"><rect x="0" y="7.5" width="20" height="1" fill="#555555"/><rect x="4.5" y="1" width="4.5" height="11" fill="#555555"/><rect x="10.5" y="3.5" width="4" height="7" fill="none" stroke="#555555" stroke-width="1.2"/></svg>
<div class="t" style="left:1296.3px;top:819px;font-size:13.7px;color:#222222;font-weight:700;">Attributes</div>
<svg class="a" style="left:1589.5px;top:817px;" width="17" height="16" viewBox="0 0 17 16"><path d="M8.5 0 L8.5 16 M0.5 8 L16.5 8" stroke="#333" stroke-width="1.8"/></svg>
<svg class="a" style="left:1618px;top:822.5px;" width="12" height="7" viewBox="0 0 12 7"><path d="M1 1 L6 6 L11 1" stroke="#6e6e6e" stroke-width="1.5" fill="none"/></svg>
<div class="a" style="left:1287px;top:843px;width:354px;height:71px;background:#f1f2f3"></div>
<div class="a" style="left:1287px;top:869px;width:354px;height:1px;background:#dcdcdc"></div>
<div class="a" style="left:1287px;top:893px;width:354px;height:1px;background:#dcdcdc"></div>
<div class="a" style="left:1436px;top:846px;width:1px;height:68px;background:#dcdcdc"></div>
<div class="t" style="left:1297.4px;top:850.5px;font-size:13.7px;color:#7b7b7b;font-weight:400;">class</div>
<div class="t" style="left:1297.4px;top:874.6px;font-size:13.7px;color:#7b7b7b;font-weight:400;">id</div>
<div class="t" style="left:1297.4px;top:898.3px;font-size:13.7px;color:#7b7b7b;font-weight:400;">style</div>
<div class="a" style="left:1603px;top:855px;width:50px;height:50px;background:#333333;border-radius:50%;box-shadow:0 2px 6px rgba(0,0,0,0.3)"></div>
<div class="t" style="left:1622.3px;top:871.5px;font-size:19px;color:#ffffff;font-weight:700;">?</div>
<svg class="a" style="left:1646.5px;top:899.5px;" width="10" height="5" viewBox="0 0 10 5"><path d="M0 0 L5 5 L10 0 Z" fill="#505050"/></svg>
<div class="a" style="left:0px;top:914px;width:1686px;height:28px;background:#f2f2f2"></div>
<div class="a" style="left:0px;top:914px;width:1686px;height:1px;background:#d1d1d1"></div>
<div class="a" style="left:0px;top:941px;width:1686px;height:1px;background:#d1d1d1"></div>
<svg class="a" style="left:37.5px;top:921px;" width="12" height="17" viewBox="0 0 12 17"><circle cx="2.5" cy="2.5" r="2" fill="#6e6e6e"/><circle cx="2.5" cy="14.5" r="2" fill="#6e6e6e"/><circle cx="9.5" cy="3.5" r="2" fill="#6e6e6e"/><path d="M2.5 2.5 L2.5 14.5 M9.5 3.5 C9.5 8 3 8 2.5 12" stroke="#6e6e6e" stroke-width="1.8" fill="none"/></svg>
<div class="t" style="left:57.8px;top:924px;font-size:13px;color:#1a1a1a;font-weight:400;">Git</div>
<svg class="a" style="left:99px;top:923px;" width="14" height="12" viewBox="0 0 14 12"><rect x="0" y="0" width="2.5" height="2" fill="#6e6e6e"/><rect x="4" y="0" width="10" height="2" fill="#6e6e6e"/><rect x="0" y="4.7" width="2.5" height="2" fill="#6e6e6e"/><rect x="4" y="4.7" width="10" height="2" fill="#6e6e6e"/><rect x="0" y="9.4" width="2.5" height="2" fill="#6e6e6e"/><rect x="4" y="9.4" width="10" height="2" fill="#6e6e6e"/></svg>
<div class="t" style="left:118.7px;top:924px;font-size:13px;color:#1a1a1a;font-weight:400;">TODO</div>
<svg class="a" style="left:181px;top:922px;" width="13" height="13" viewBox="0 0 13 13"><circle cx="6.5" cy="6.5" r="6.5" fill="#6e6e6e"/><rect x="5.4" y="2.5" width="2.2" height="5.3" fill="#fff"/><rect x="5.4" y="9" width="2.2" height="2" fill="#fff"/></svg>
<div class="t" style="left:201.2px;top:924px;font-size:13px;color:#1a1a1a;font-weight:400;">Problems</div>
<svg class="a" style="left:281.5px;top:921px;" width="17" height="17" viewBox="0 0 17 17"><circle cx="7" cy="7" r="5.8" fill="none" stroke="#6e6e6e" stroke-width="1.5"/><path d="M7 3.5 L7 7 L5 9" stroke="#6e6e6e" stroke-width="1.2" fill="none"/><path d="M9 8 L16.5 12.3 L9 16.6 Z" fill="#6e6e6e"/></svg>
<div class="t" style="left:302.8px;top:924px;font-size:13px;color:#1a1a1a;font-weight:400;">Profiler</div>
<svg class="a" style="left:371.4px;top:922px;" width="15" height="14" viewBox="0 0 15 14"><rect width="15" height="14" fill="#6e6e6e"/><path d="M3 3.5 L6.5 6.5 L3 9.5 M7 11 L12 11" stroke="#f2f2f2" stroke-width="1.3" fill="none"/></svg>
<div class="t" style="left:392px;top:924px;font-size:13px;color:#1a1a1a;font-weight:400;">Terminal</div>
<svg class="a" style="left:466px;top:920.5px;" width="17" height="17" viewBox="0 0 17 17"><circle cx="8.5" cy="8.5" r="7.6" fill="none" stroke="#d9534f" stroke-width="1.5"/><path d="M3.2 8.5 L4.2 7 L5.2 10 L6.2 7 L7.2 10 L8.2 7 L9.2 10 L10.2 7 L11.2 10 L12.2 7 L13.2 8.5" stroke="#d9534f" stroke-width="1" fill="none"/></svg>
<div class="t" style="left:488.3px;top:924px;font-size:13px;color:#1a1a1a;font-weight:400;">SonarLint</div>
<svg class="a" style="left:567.6px;top:921px;" width="17" height="17" viewBox="0 0 17 17"><circle cx="9" cy="2.8" r="2.5" fill="#6e6e6e"/><circle cx="2.8" cy="14" r="2.5" fill="#6e6e6e"/><circle cx="14" cy="14" r="2.5" fill="#6e6e6e"/><path d="M9 3 L3 14 M9 3 L14 14" stroke="#6e6e6e" stroke-width="1.8"/></svg>
<div class="t" style="left:589px;top:924px;font-size:13px;color:#1a1a1a;font-weight:400;">Endpoints</div>
<svg class="a" style="left:672px;top:920.5px;" width="16" height="17" viewBox="0 0 16 17"><path d="M1 4.5 L5 0.8 L7.5 2.5 L6 4.3 L15.5 14.3 L13.7 16 L4.3 6 L2.6 7.6 Z" fill="#6e6e6e"/></svg>
<div class="t" style="left:693.3px;top:924px;font-size:13px;color:#1a1a1a;font-weight:400;">Build</div>
<svg class="a" style="left:745.7px;top:921px;" width="15" height="17" viewBox="0 0 15 17"><path d="M7.5 0.5 L15 4.5 L7.5 8.5 L0 4.5 Z" fill="#6e6e6e"/><path d="M0 7.5 L7.5 11.5 L15 7.5 L15 9 L7.5 13 L0 9 Z" fill="#6e6e6e"/><path d="M0 11 L7.5 15 L15 11 L15 12.5 L7.5 16.5 L0 12.5 Z" fill="#6e6e6e"/></svg>
<div class="t" style="left:767.3px;top:924px;font-size:13px;color:#1a1a1a;font-weight:400;">Dependencies</div>
<svg class="a" style="left:875.4px;top:922px;" width="17" height="14" viewBox="0 0 17 14"><path d="M16.5 0.5 C16 8 12 12.5 6 12.5 C3 12.5 1 11 1 8.5 C1 5 5 3.5 9 3.5 C12 3.5 15 2.5 16.5 0.5 Z" fill="#6e6e6e"/><path d="M1 13 C3 10 6 8 9 7" stroke="#f2f2f2" stroke-width="1" fill="none"/></svg>
<div class="t" style="left:897px;top:924px;font-size:13px;color:#1a1a1a;font-weight:400;">Spring</div>
<svg class="a" style="left:1570.5px;top:921.5px;" width="16" height="16" viewBox="0 0 16 16"><path d="M8 1 C12 1 15 4 15 8 L15 15 L8 15 C4 15 1 12 1 8 C1 4 4 1 8 1 Z" fill="none" stroke="#6e6e6e" stroke-width="1.5"/></svg>
<div class="t" style="left:1592.3px;top:924px;font-size:13px;color:#1a1a1a;font-weight:400;">Event Log</div>
<div class="a" style="left:0px;top:942px;width:1686px;height:26px;background:#f2f2f2"></div>
<svg class="a" style="left:6px;top:947px;" width="15" height="15" viewBox="0 0 15 15"><rect x="3.5" y="0.5" width="11" height="11" fill="none" stroke="#6e6e6e" stroke-width="1.2"/><path d="M1.5 3 L1.5 13.5 L12 13.5" stroke="#6e6e6e" stroke-width="1.2" fill="none"/></svg>
<div class="t" style="left:1443.4px;top:948px;font-size:14.3px;color:#1a1a1a;font-weight:400;">TypeScript 4.0.3</div>
<svg class="a" style="left:1564.8px;top:946.5px;" width="13" height="17" viewBox="0 0 13 17"><circle cx="2.5" cy="2.5" r="2" fill="#6e6e6e"/><circle cx="2.5" cy="14.5" r="2" fill="#6e6e6e"/><circle cx="10" cy="3" r="2" fill="#6e6e6e"/><path d="M2.5 2.5 L2.5 14.5 M10 3 C10 8 3 8 2.5 12" stroke="#6e6e6e" stroke-width="1.8" fill="none"/></svg>
<div class="t" style="left:1583.8px;top:948px;font-size:14.7px;color:#1a1a1a;font-weight:400;">main</div>
<svg class="a" style="left:1628px;top:947.5px;" width="15" height="14" viewBox="0 0 15 14"><path d="M2 6 L2 3.5 C2 1.5 3.5 0.5 5 0.5 C6.5 0.5 8 1.5 8 3.5" stroke="#6e6e6e" stroke-width="1.6" fill="none"/><rect x="4.5" y="6" width="10" height="8" fill="#6e6e6e"/></svg>
<svg class="a" style="left:1656px;top:945px;" width="22" height="22" viewBox="0 0 22 22"><path d="M4 13 C1.2 13 0.8 8 4 7.6 C4.6 3.8 7.2 1.5 10.5 1.5 C14 1.5 16.5 4 16.8 7.6 C18.5 7.8 19.5 9 19.5 10.5 L13 13 Z" fill="#6e6e6e"/><text x="7" y="10.5" font-family="Liberation Sans" font-weight="bold" font-size="9" fill="#f2f2f2">?</text><circle cx="16" cy="16" r="5" fill="#f2f2f2"/></svg>
<svg class="a" style="left:1668.5px;top:953.5px;" width="10" height="10" viewBox="0 0 10 10"><g transform="rotate(0 5 5)"><rect x="3.9" y="0" width="2.2" height="10" fill="#6e6e6e"/><rect x="3.9" y="0" width="2.2" height="10" fill="#6e6e6e" transform="rotate(60 5 5)"/><rect x="3.9" y="0" width="2.2" height="10" fill="#6e6e6e" transform="rotate(120 5 5)"/></g><circle cx="5" cy="5" r="3.6" fill="#6e6e6e"/><circle cx="5" cy="5" r="1.5" fill="#f2f2f2"/></svg>
</body></html>
